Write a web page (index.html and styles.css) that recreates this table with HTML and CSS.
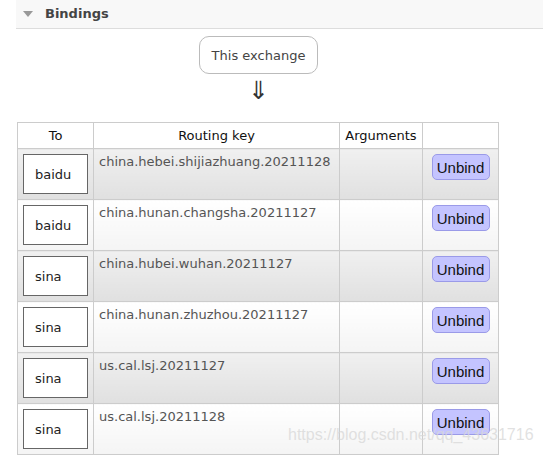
FILE: index.html
```html
<!DOCTYPE html>
<html lang="en">
<head>
    <meta charset="UTF-8">
    <title>Exchange - Bindings</title>
    <link rel="stylesheet" href="styles.css">
</head>
<body>
    <!-- Bindings section -->
    <div class="section">
        <h2 class="section-title"><span class="toggle"></span>Bindings</h2>
        <div class="hider">
            <div class="bindings-wrapper">
                <div class="exchange-box">This exchange</div>
                <div class="arrow">&dArr;</div>
            </div>
            <table class="list">
                <thead>
                    <tr>
                        <th class="col-to">To</th>
                        <th class="col-key">Routing key</th>
                        <th class="col-args">Arguments</th>
                        <th class="col-action"></th>
                    </tr>
                </thead>
                <tbody>
                    <tr class="alt1">
                        <td><span class="queue">baidu</span></td>
                        <td class="key">china.hebei.shijiazhuang.20211128</td>
                        <td></td>
                        <td class="c"><button class="btn-unbind">Unbind</button></td>
                    </tr>
                    <tr class="alt2">
                        <td><span class="queue">baidu</span></td>
                        <td class="key">china.hunan.changsha.20211127</td>
                        <td></td>
                        <td class="c"><button class="btn-unbind">Unbind</button></td>
                    </tr>
                    <tr class="alt1">
                        <td><span class="queue">sina</span></td>
                        <td class="key">china.hubei.wuhan.20211127</td>
                        <td></td>
                        <td class="c"><button class="btn-unbind">Unbind</button></td>
                    </tr>
                    <tr class="alt2">
                        <td><span class="queue">sina</span></td>
                        <td class="key">china.hunan.zhuzhou.20211127</td>
                        <td></td>
                        <td class="c"><button class="btn-unbind">Unbind</button></td>
                    </tr>
                    <tr class="alt1">
                        <td><span class="queue">sina</span></td>
                        <td class="key">us.cal.lsj.20211127</td>
                        <td></td>
                        <td class="c"><button class="btn-unbind">Unbind</button></td>
                    </tr>
                    <tr class="alt2">
                        <td><span class="queue">sina</span></td>
                        <td class="key">us.cal.lsj.20211128</td>
                        <td></td>
                        <td class="c"><button class="btn-unbind">Unbind</button></td>
                    </tr>
                </tbody>
            </table>
        </div>
    </div>

    <div class="watermark">https://blog.csdn.net/qq_43631716</div>
</body>
</html>
```

FILE: styles.css
```css
* {
    margin: 0;
    padding: 0;
    box-sizing: border-box;
}

body {
    background-color: #fff;
    color: #484848;
    font-family: "DejaVu Sans", Verdana, sans-serif;
    font-size: 13px;
    position: relative;
    height: 457px;
    overflow: hidden;
}

.section {
    padding-left: 16px;
}

.section-title {
    display: flex;
    align-items: center;
    height: 29px;
    background-color: #f8f8f8;
    border-bottom: 1px solid #ddd;
    font-size: 13px;
    font-weight: bold;
    color: #444;
    padding-left: 7px;
    padding-bottom: 1px;
}

.toggle {
    width: 0;
    height: 0;
    border-left: 5px solid transparent;
    border-right: 5px solid transparent;
    border-top: 6px solid #999;
    margin-right: 12px;
}

.bindings-wrapper {
    display: flex;
    flex-direction: column;
    align-items: center;
    width: 485px;
    padding-top: 7px;
}

.exchange-box {
    width: 119px;
    height: 38px;
    border: 1px solid #bbb;
    border-radius: 10px;
    display: flex;
    align-items: center;
    justify-content: center;
    color: #444;
    font-size: 13px;
}

.arrow {
    font-size: 25px;
    line-height: 30px;
    height: 48px;
    color: #333;
    padding-top: 2px;
}

table.list {
    border-collapse: collapse;
    margin-left: 1px;
    width: 481px;
    table-layout: fixed;
}

.col-to { width: 76px; }
.col-key { width: 246px; }
.col-args { width: 83px; }
.col-action { width: 76px; }

th, td {
    border: 1px solid #ccc;
}

th {
    height: 26px;
    font-weight: normal;
    color: #111;
    font-size: 13px;
    text-align: center;
    background-color: #fff;
}

td {
    height: 51px;
    vertical-align: top;
    padding: 5px 5px;
}

td.key {
    color: #555;
    font-size: 13px;
    line-height: 16px;
}

td.c {
    text-align: center;
    padding-top: 5px;
}

tr.alt1 td {
    background: linear-gradient(#f0f0f0, #e0e0e0);
}

tr.alt2 td {
    background: linear-gradient(#fff, #f4f4f4);
}

.queue {
    display: flex;
    align-items: center;
    width: 65px;
    height: 40px;
    border: 1px solid #666;
    background-color: #fff;
    color: #222;
    padding-left: 11px;
    font-size: 13px;
}

.btn-unbind {
    width: 58px;
    height: 26px;
    background-color: #c4c4ff;
    border: 1px solid #9a9ae8;
    border-radius: 5px;
    color: #111;
    font-family: "Liberation Sans", Arial, sans-serif;
    font-size: 15px;
}

.watermark {
    position: absolute;
    left: 288px;
    top: 426px;
    font-family: "Liberation Sans", Arial, sans-serif;
    font-size: 16px;
    color: rgba(215, 215, 215, 0.75);
    pointer-events: none;
}
```
